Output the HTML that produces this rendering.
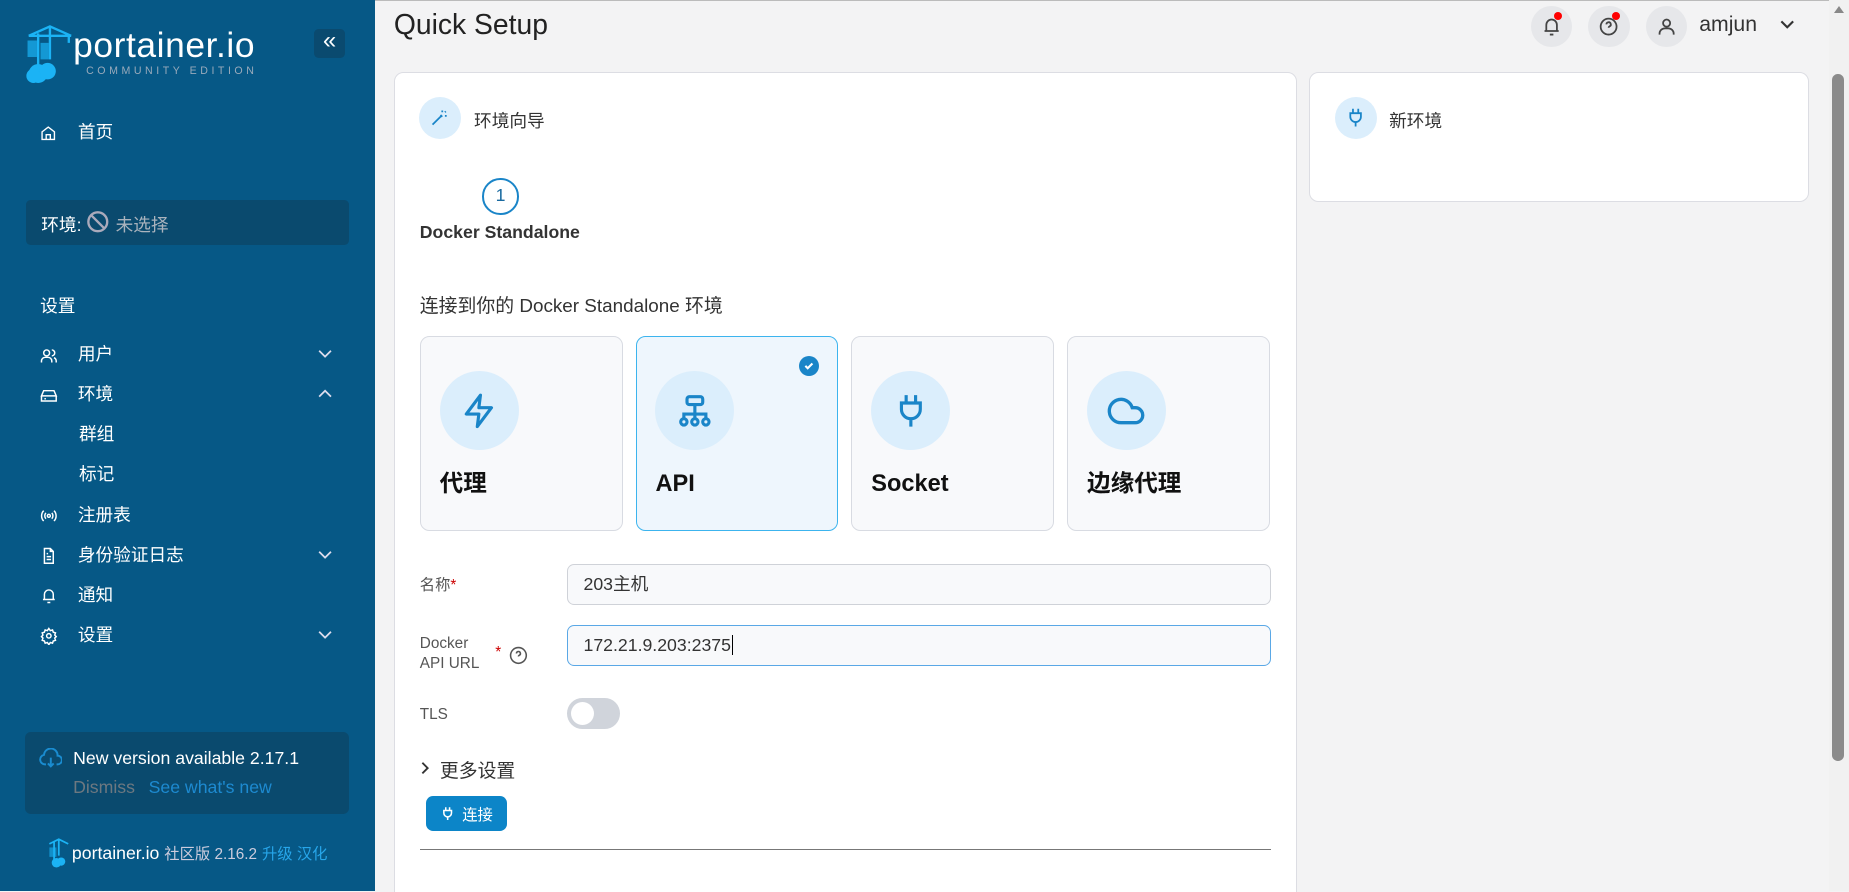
<!DOCTYPE html>
<html><head><meta charset="utf-8"><style>
html{zoom:1.17921;background:#f3f3f4;height:756px;overflow:hidden}
*{box-sizing:border-box;margin:0;padding:0}
body{width:1568px;height:756px;overflow:hidden;background:#f3f3f4;font-family:"Liberation Sans","Noto Sans CJK SC",sans-serif;position:relative;color:#333}
.a{position:absolute}
#sb{left:0;top:0;width:318px;height:756px;background:#065886;color:#fff}
.mi{position:absolute;left:0;width:318px;height:20px;font-size:15px;line-height:20px;color:#fff}
.mi svg{position:absolute;left:34px;top:3px}
.mi span{position:absolute;left:66px;white-space:nowrap}
.mi svg.chev{left:270px;top:5px}
.card{background:#fff;border:1px solid #dcdde3;border-radius:8px}
.opt{position:absolute;top:285px;width:172px;height:165px;border:1px solid #d8dbe2;border-radius:8px;background:#f8f9fb}
.opt .ic{position:absolute;left:16px;top:29px;width:67px;height:67px;border-radius:50%;background:#dbeefc;display:flex;align-items:center;justify-content:center}
.opt b{position:absolute;left:16px;top:112px;font-size:20px;line-height:24px;color:#111}
.inp{position:absolute;left:481px;width:597px;height:35px;border:1px solid #cfd2d8;border-radius:6px;background:#f8f9fb;font-size:15px;padding:0 13px;line-height:33px;color:#333}
.lab{position:absolute;left:356px;font-size:13px;color:#555}
.tb{position:absolute;top:5px;width:35px;height:35px;border-radius:50%;background:#e6e7ea;display:flex;align-items:center;justify-content:center}
.dot{position:absolute;width:7px;height:7px;border-radius:50%;background:#f00}
</style></head><body>
<div class="a" style="left:0;top:0;width:1568px;height:1px;background:#bbb"></div>
<div id="sb" class="a">
 <svg class="a" style="left:20px;top:20px" width="44" height="52" viewBox="0 0 44 52"><path d="M12 8 L12 40 M4 10 L22 2 L40 10 M22 2 L22 30 M4 10h36 M38 10v6" stroke="#1bb3f5" stroke-width="2" fill="none"/><rect x="3" y="14" width="8" height="14" fill="#1bb3f5" opacity=".7"/><rect x="14" y="16" width="7" height="14" fill="#1bb3f5" opacity=".7"/><circle cx="12" cy="42" r="8" fill="#1bb3f5"/><circle cx="20" cy="40" r="7" fill="#1bb3f5"/><circle cx="8" cy="44" r="6" fill="#1bb3f5"/></svg>
 <div class="a" style="left:62px;top:22px;font-size:30px;color:#fff;letter-spacing:.5px">portainer.io</div>
 <div class="a" style="left:73px;top:55px;font-size:9px;color:#9ab;letter-spacing:3px">COMMUNITY EDITION</div>
 <div class="a" style="left:266px;top:25px;width:27px;height:24px;background:#0a4a6f;border-radius:4px;color:#fff;font-size:20px;line-height:20px;text-align:center">«</div>
 <div class="mi" style="top:103px"><svg width="14" height="14" viewBox="0 0 24 24" fill="none" stroke="#fff" stroke-width="2"><path d="M3 10l9-7 9 7v11H3z M9 21v-7h6v7"/></svg><span>首页</span></div>
 <div class="a" style="left:22px;top:170px;width:274px;height:38px;background:#0a4a6e;border-radius:4px"></div>
 <div class="a" style="left:35px;top:179px;font-size:15px;color:#fff">环境:</div>
 <svg class="a" style="left:73px;top:178px" width="20" height="20" viewBox="0 0 20 20" fill="none" stroke="#aab" stroke-width="2"><circle cx="10" cy="10" r="8"/><path d="M4.5 4.5l11 11"/></svg>
 <div class="a" style="left:98px;top:179px;font-size:15px;color:#aab3bd">未选择</div>
 <div class="a" style="left:34px;top:248px;font-size:15px">设置</div>
 <div class="mi" style="top:291px"><svg width="15" height="15" viewBox="0 0 24 24" fill="none" stroke="#fff" stroke-width="2"><circle cx="9" cy="8" r="4"/><path d="M2 21v-2a5 5 0 0 1 5-5h4a5 5 0 0 1 5 5v2M16 4a4 4 0 0 1 0 8M22 21v-2a5 5 0 0 0-3-4.5"/></svg><span>用户</span><svg class="chev" width="12" height="8" viewBox="0 0 12 8" fill="none" stroke="#dde" stroke-width="1.5"><path d="M1 1.5l5 5 5-5"/></svg></div>
 <div class="mi" style="top:325px"><svg width="15" height="15" viewBox="0 0 24 24" fill="none" stroke="#fff" stroke-width="2"><path d="M22 12H2l3-7h14zM2 12v7h20v-7M6 16h2"/></svg><span>环境</span><svg class="chev" width="12" height="8" viewBox="0 0 12 8" fill="none" stroke="#dde" stroke-width="1.5"><path d="M1 6.5l5-5 5 5"/></svg></div>
 <div class="mi" style="top:359px"><span style="left:67px">群组</span></div>
 <div class="mi" style="top:393px"><span style="left:67px">标记</span></div>
 <div class="mi" style="top:427px"><svg width="15" height="15" viewBox="0 0 24 24" fill="none" stroke="#fff" stroke-width="2"><circle cx="12" cy="12" r="2"/><path d="M16 8a6 6 0 0 1 0 8M8 16a6 6 0 0 1 0-8M19 5a10 10 0 0 1 0 14M5 19A10 10 0 0 1 5 5"/></svg><span>注册表</span></div>
 <div class="mi" style="top:461px"><svg width="15" height="15" viewBox="0 0 24 24" fill="none" stroke="#fff" stroke-width="2"><path d="M14 2H6v20h12V6zM14 2v4h4M9 13h6M9 17h6M9 9h2"/></svg><span>身份验证日志</span><svg class="chev" width="12" height="8" viewBox="0 0 12 8" fill="none" stroke="#dde" stroke-width="1.5"><path d="M1 1.5l5 5 5-5"/></svg></div>
 <div class="mi" style="top:495px"><svg width="15" height="15" viewBox="0 0 24 24" fill="none" stroke="#fff" stroke-width="2"><path d="M6 17V10a6 6 0 0 1 12 0v7H6zM4 17h16M10 21h4"/></svg><span>通知</span></div>
 <div class="mi" style="top:529px"><svg width="15" height="15" viewBox="0 0 24 24" fill="none" stroke="#fff" stroke-width="2"><circle cx="12" cy="12" r="3"/><path d="M12 2l2 3 3-1 1 3 3 1-1 3 2 2-2 2 1 3-3 1-1 3-3-1-2 3-2-3-3 1-1-3-3-1 1-3-2-2 2-2-1-3 3-1 1-3 3 1z"/></svg><span>设置</span><svg class="chev" width="12" height="8" viewBox="0 0 12 8" fill="none" stroke="#dde" stroke-width="1.5"><path d="M1 1.5l5 5 5-5"/></svg></div>
 <div class="a" style="left:21px;top:621px;width:275px;height:69px;background:#0a4a6e;border-radius:5px"></div>
 <svg class="a" style="left:33px;top:634px" width="20" height="18" viewBox="0 0 24 22" fill="none" stroke="#1a8cd0" stroke-width="2"><path d="M7 17H6a5 5 0 0 1-1-9.9A7 7 0 0 1 19 8a4.5 4.5 0 0 1 0 9h-1M12 10v9M9 16l3 3 3-3"/></svg>
 <div class="a" style="left:62px;top:634px;font-size:15px;color:#fff">New version available 2.17.1</div>
 <div class="a" style="left:62px;top:659px;font-size:15px;color:#6d7880">Dismiss</div>
 <div class="a" style="left:126px;top:659px;font-size:15px;color:#1d8ad0">See what's new</div>
 <svg class="a" style="left:40px;top:711px" width="20" height="25" viewBox="0 0 20 25"><path d="M6 3v17M2 5l8-4 8 4M10 1v14" stroke="#1bb3f5" stroke-width="1.5" fill="none"/><rect x="2" y="8" width="6" height="8" fill="#1bb3f5" opacity=".6"/><circle cx="8" cy="21" r="4" fill="#1bb3f5"/><circle cx="12" cy="20" r="3.5" fill="#1bb3f5"/></svg>
 <div class="a" style="left:61px;top:714px;font-size:15px;color:#fff;white-space:nowrap">portainer.io <span style="font-size:13px;color:#ccd">社区版 2.16.2</span> <span style="font-size:13px;color:#27a6ea">升级 汉化</span></div>
</div>

<div class="a" style="left:334px;top:7px;font-size:24px;color:#222">Quick Setup</div>
<div class="tb" style="left:1298px"><svg width="18" height="18" viewBox="0 0 24 24" fill="none" stroke="#444" stroke-width="2"><path d="M6 17V10a6 6 0 0 1 12 0v7H6zM4 17h16M10 21h4"/></svg><div class="dot" style="left:20px;top:5px"></div></div>
<div class="tb" style="left:1347px"><svg width="18" height="18" viewBox="0 0 24 24" fill="none" stroke="#444" stroke-width="2"><circle cx="12" cy="12" r="9"/><path d="M9.5 9.5a2.5 2.5 0 1 1 3.5 2.3c-.6.3-1 .8-1 1.5M12 17h.01"/></svg><div class="dot" style="left:20px;top:5px"></div></div>
<div class="tb" style="left:1396px"><svg width="18" height="18" viewBox="0 0 24 24" fill="none" stroke="#444" stroke-width="2"><circle cx="12" cy="8" r="4"/><path d="M4 21v-1a6 6 0 0 1 6-6h4a6 6 0 0 1 6 6v1"/></svg></div>
<div class="a" style="left:1441px;top:11px;font-size:18px;color:#333">amjun</div>
<svg class="a" style="left:1509px;top:16px" width="14" height="10" viewBox="0 0 14 10" fill="none" stroke="#333" stroke-width="1.8"><path d="M2 2l5 5 5-5"/></svg>
<div class="a" style="left:1551px;top:0;width:17px;height:756px;background:#f1f1f1"></div>
<div class="a" style="left:1554px;top:63px;width:10px;height:582px;background:#8b8b8b;border-radius:5px"></div>
<div class="a" style="left:1555px;top:5px;width:0;height:0;border-left:5px solid transparent;border-right:5px solid transparent;border-bottom:6px solid #888"></div>

<div class="a card" style="left:334px;top:61px;width:766px;height:720px"></div>
<div class="a card" style="left:1110px;top:61px;width:424px;height:110px"></div>
<div class="a" style="left:1132px;top:82px;width:36px;height:36px;border-radius:50%;background:#dbeefc;display:flex;align-items:center;justify-content:center"><svg width="18" height="18" viewBox="0 0 24 24" fill="none" stroke="#1a85c8" stroke-width="2"><path d="M9 2v5M15 2v5M6 7h12v4a6 6 0 0 1-12 0zM12 17v5"/></svg></div>
<div class="a" style="left:1178px;top:91px;font-size:15px;color:#333">新环境</div>

<div class="a" style="left:355px;top:82px;width:36px;height:36px;border-radius:50%;background:#dbeefc;display:flex;align-items:center;justify-content:center"><svg width="18" height="18" viewBox="0 0 24 24" fill="none" stroke="#1a85c8" stroke-width="2"><path d="M4 20l10-10M15 4v2M18 6l1-1M20 10h-2M13 9l2 2"/></svg></div>
<div class="a" style="left:402px;top:91px;font-size:15px;color:#333">环境向导</div>
<div class="a" style="left:409px;top:151px;width:31px;height:31px;border-radius:50%;border:2px solid #1a85c8;text-align:center;line-height:27px;font-size:15px;color:#1a6aa0">1</div>
<div class="a" style="left:356px;top:188px;font-size:15px;font-weight:bold;color:#333">Docker Standalone</div>
<div class="a" style="left:356px;top:247px;font-size:16px;color:#333">连接到你的 Docker Standalone 环境</div>

<div class="opt" style="left:356px"><div class="ic"><svg width="32" height="32" viewBox="0 0 24 24" fill="none" stroke="#1a85c8" stroke-width="2" stroke-linejoin="round"><path d="M13 2L4 14h8l-1 8 9-12h-8z"/></svg></div><b>代理</b></div>
<div class="opt" style="left:539px;border-color:#3cb4ee;background:#eef6fd"><div class="ic"><svg width="32" height="32" viewBox="0 0 24 24" fill="none" stroke="#1a85c8" stroke-width="2"><rect x="7" y="3" width="10" height="5" rx="1.5"/><path d="M12 8v6M5 17v-3h14v3M12 14v3"/><circle cx="5" cy="19" r="2"/><circle cx="12" cy="19" r="2"/><circle cx="19" cy="19" r="2"/></svg></div><b>API</b>
 <div class="a" style="left:138px;top:16px;width:17px;height:17px;border-radius:50%;background:#1a85c8;display:flex;align-items:center;justify-content:center"><svg width="10" height="10" viewBox="0 0 10 10" fill="none" stroke="#fff" stroke-width="1.8"><path d="M2 5l2 2 4-4"/></svg></div></div>
<div class="opt" style="left:722px"><div class="ic"><svg width="32" height="32" viewBox="0 0 24 24" fill="none" stroke="#1a85c8" stroke-width="2"><path d="M9 2v5M15 2v5M6 7h12v4a6 6 0 0 1-12 0zM12 17v5"/></svg></div><b>Socket</b></div>
<div class="opt" style="left:905px"><div class="ic"><svg width="34" height="34" viewBox="0 0 24 24" fill="none" stroke="#1a85c8" stroke-width="2"><path d="M17.5 19H9a7 7 0 1 1 6.7-9h1.8a4.5 4.5 0 0 1 0 9z"/></svg></div><b>边缘代理</b></div>

<div class="lab" style="top:486px">名称<span style="color:#c00">*</span></div>
<div class="inp" style="top:478px">203主机</div>
<div class="lab" style="top:538px;line-height:17px">Docker<br>API URL</div>
<div class="a" style="left:420px;top:546px;color:#c00;font-size:13px">*</div>
<svg class="a" style="left:432px;top:548px" width="16" height="16" viewBox="0 0 24 24" fill="none" stroke="#555" stroke-width="2"><circle cx="12" cy="12" r="10"/><path d="M9.5 9.5a2.5 2.5 0 1 1 3.5 2.3c-.6.3-1 .8-1 1.5M12 17h.01"/></svg>
<div class="inp" style="top:530px;border-color:#5aa8e6">172.21.9.203:2375<span style="border-left:1px solid #000;margin-left:1px"></span></div>
<div class="lab" style="top:599px">TLS</div>
<div class="a" style="left:481px;top:592px;width:45px;height:26px;border-radius:13px;background:#d0d4db"><div class="a" style="left:3px;top:3px;width:20px;height:20px;border-radius:50%;background:#fff"></div></div>
<svg class="a" style="left:356px;top:645px" width="9" height="12" viewBox="0 0 9 12" fill="none" stroke="#333" stroke-width="1.6"><path d="M2 1.5l4.5 4.5L2 10.5"/></svg>
<div class="a" style="left:373px;top:641px;font-size:16px;color:#333">更多设置</div>
<div class="a" style="left:361px;top:675px;width:69px;height:30px;background:#0c85c8;border-radius:6px;color:#fff;font-size:13px;display:flex;align-items:center;justify-content:center;gap:6px"><svg width="13" height="13" viewBox="0 0 24 24" fill="none" stroke="#fff" stroke-width="2.4"><path d="M9 2v5M15 2v5M6 7h12v4a6 6 0 0 1-12 0zM12 17v5"/></svg>连接</div>
<div class="a" style="left:356px;top:720px;width:722px;height:1px;background:#777"></div>
</body></html>
